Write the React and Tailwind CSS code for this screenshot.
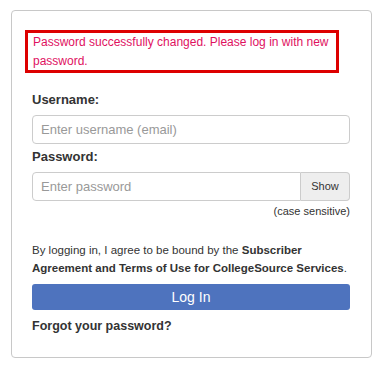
import React from "react";

const App = () => {
  return (
    <div className="min-h-[365px] bg-white px-[11px] pt-[10px] font-['Liberation_Sans',Arial,sans-serif] text-[#333]">
      <div className="w-[361px] h-[348px] rounded-[4px] border border-[#c8c8c8] px-[20px] pt-[19px]">
        <div className="-ml-[7px] w-[314px] border-[3px] border-[#dd0000] px-[5px] text-[12px] leading-[18.5px] text-[#e0115f]">
          Password successfully changed. Please log in with new password.
        </div>

        <div className="mt-[18px] text-[13px] font-bold leading-[18px]">Username:</div>
        <input
          className="mt-[6px] block h-[29px] w-[318px] rounded-[4px] border border-[#ccc] px-[8px] text-[13px] placeholder-[#999] outline-none"
          placeholder="Enter username (email)"
        />

        <div className="mt-[4px] text-[13px] font-bold leading-[18px]">Password:</div>
        <div className="mt-[6px] flex h-[29px] w-[318px]">
          <input
            className="h-full flex-1 min-w-0 rounded-l-[4px] border border-[#ccc] px-[8px] text-[13px] placeholder-[#999] outline-none"
            placeholder="Enter password"
          />
          <button className="h-full w-[49px] rounded-r-[4px] border border-l-0 border-[#ccc] bg-[#eee] text-[11px] text-[#333]">
            Show
          </button>
        </div>
        <div className="w-[318px] text-right text-[11px] leading-[20px]">(case sensitive)</div>

        <p className="mt-[21px] text-[11.5px] leading-[17.5px]">
          By logging in, I agree to be bound by the{" "}
          <b>Subscriber Agreement and Terms of Use for CollegeSource Services</b>.
        </p>
        <button className="mt-[7px] block h-[26px] w-[318px] rounded-[3px] bg-[#4e73be] text-[14px] text-white">
          Log In
        </button>
        <div className="mt-[7px] text-[12.5px] font-bold leading-[18px]">Forgot your password?</div>
      </div>
    </div>
  );
};

export default App;
